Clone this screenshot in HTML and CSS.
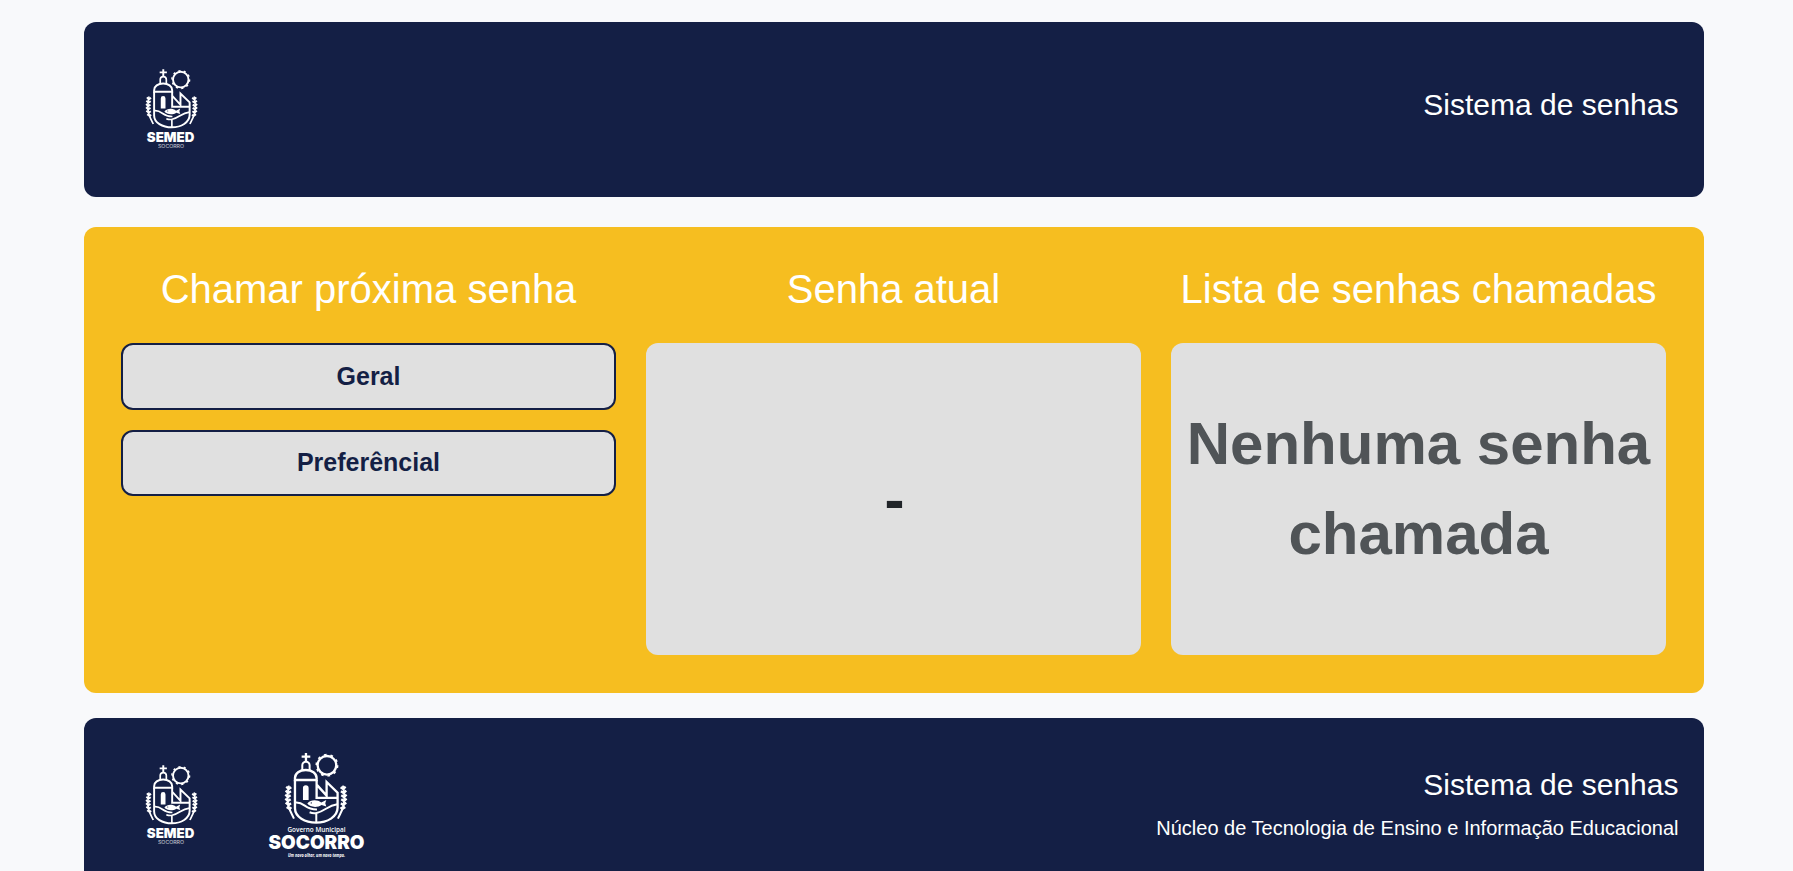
FILE: index.html
```html
<!DOCTYPE html>
<html lang="pt-BR">
<head>
<meta charset="utf-8">
<title>Sistema de senhas</title>
<link rel="stylesheet" href="styles.css">
</head>
<body>
<svg class="defs" width="0" height="0" aria-hidden="true">
  <symbol id="emblem" viewBox="100 36 196 218">
    <g fill="none" stroke="#fff" stroke-width="7">
      <path d="M168 39v26M155 50h26"/>
      <path d="M157 90V76a11 11 0 0 1 22 0v14" stroke-width="6"/>
      <path d="M135 120v-6c0-14 14-24 32.500-24s32.500 10 32.500 24v6z"/>
      <path d="M135 120v85c0 26 30 43 63.500 43s64.500-17 64.500-45v-45l-33-32v41l-30-33v40h63M200 120v20"/>
      <circle cx="231" cy="76" r="28"/>
      <circle cx="231" cy="76" r="32" stroke-width="5" stroke-dasharray="8 12.100"/>
      <path d="M137 188c28-2 27 22 64 21M262 193c-30 4-35 20-62 26-9 2-16 0-21-2M199 221v26" stroke-width="6"/>
      <path d="M117 137c-5 22-8 50 3 74 4 9 8 16 12 25M279 137c5 22 8 50-3 74-4 9-8 16-12 25" stroke-width="6"/>
      <path d="M109 140l7 7 8-5M107 152l8 7 8-5M106 164l8 7 8-5M106 176l8 7 8-5M107 188l9 7 7-5M110 201l9 6 5-5M287 140l-7 7-8-5M289 152l-8 7-8-5M290 164l-8 7-8-5M290 176l-8 7-8-5M289 188l-9 7-7-5M286 201l-9 6-5-5" stroke-width="7"/>
    </g>
    <path d="M159 180v-36a8.500 8.500 0 0 1 17 0v36zM172 191c10-12 29-13 42-3l15-8-3 10 3 10-14-5c-12 9-34 8-43-4z" fill="#fff"/>
    <circle cx="184" cy="189" r="2" fill="#141f45"/>
  </symbol>
</svg>

<header class="bar">
  <div class="logos">
    <svg class="logo-semed" viewBox="0 0 80 100" role="img" aria-label="SEMED Socorro">
      <use href="#emblem" x="14.400" y="13.500" width="54.400" height="60.500"/>
      <text x="40.600" y="86.600" class="semed-name" textLength="47.500" lengthAdjust="spacingAndGlyphs">SEMED</text>
      <text x="41" y="93.200" class="semed-city" textLength="26" lengthAdjust="spacingAndGlyphs">SOCORRO</text>
    </svg>
  </div>
  <div class="bar-text"><h3>Sistema de senhas</h3></div>
</header>

<main class="panel">
  <section class="column">
    <h2>Chamar próxima senha</h2>
    <button class="call">Geral</button>
    <button class="call">Preferêncial</button>
  </section>
  <section class="column">
    <h2>Senha atual</h2>
    <div class="card card-current">-</div>
  </section>
  <section class="column">
    <h2>Lista de senhas chamadas</h2>
    <div class="card card-muted">Nenhuma senha chamada</div>
  </section>
</main>

<footer class="bar bar-footer">
  <div class="logos">
    <svg class="logo-semed" viewBox="0 0 80 100" role="img" aria-label="SEMED Socorro">
      <use href="#emblem" x="14.400" y="13.500" width="54.400" height="60.500"/>
      <text x="40.600" y="86.600" class="semed-name" textLength="47.500" lengthAdjust="spacingAndGlyphs">SEMED</text>
      <text x="41" y="93.200" class="semed-city" textLength="26" lengthAdjust="spacingAndGlyphs">SOCORRO</text>
    </svg>
    <svg class="logo-city" viewBox="0 0 130 131" role="img" aria-label="Governo Municipal Socorro">
      <use href="#emblem" x="33.300" y="12" width="65.300" height="72.600"/>
      <text x="66.500" y="92" class="city-top" textLength="58" lengthAdjust="spacingAndGlyphs">Governo Municipal</text>
      <text x="66.500" y="109" class="city-name" textLength="96" lengthAdjust="spacingAndGlyphs">SOCORRO</text>
      <text x="66.500" y="117.300" class="city-motto" textLength="57" lengthAdjust="spacingAndGlyphs">Um novo olhar, um novo tempo.</text>
    </svg>
  </div>
  <div class="bar-text"><h3>Sistema de senhas</h3><p>Núcleo de Tecnologia de Ensino e Informação Educacional</p></div>
</footer>
</body>
</html>
```
FILE: styles.css
```css
* { box-sizing: border-box; }
body {
  margin: 0;
  padding: 22px 89px 0 84px;
  height: 100vh;
  overflow: hidden;
  background: #f8f9fb;
  color: #212529;
  font-family: "Liberation Sans", Arial, sans-serif;
  line-height: 1.5;
}
.defs { position: absolute; }
h2, h3, p { margin: 0; font-weight: 400; }
.bar {
  display: flex;
  justify-content: space-between;
  align-items: flex-start;
  height: 175px;
  padding: 0 25.5px 0 25px;
  border-radius: 12px;
  background: #141f45;
  color: #fff;
}
.logos { display: flex; align-items: flex-start; }
.logo-semed { display: block; width: 80px; height: 100px; margin: 33px 0 0 21px; }
.logo-city { display: block; width: 130px; height: 131px; margin: 22px 0 0 40px; }
.bar-text { padding-top: 65px; text-align: right; }
.bar h3 { margin-bottom: 10px; font-size: 30px; line-height: 36px; }
.bar p { font-size: 20px; line-height: 30px; }
.bar-footer .bar-text { padding-top: 49px; }
.panel {
  display: grid;
  grid-template-columns: repeat(3, 495px);
  gap: 30px;
  height: 466px;
  margin: 30px 0 25px;
  padding: 38px 38px 38px 37px;
  border-radius: 12px;
  background: #f6be20;
}
.column { display: flex; flex-direction: column; }
h2 {
  margin-bottom: 30px;
  color: #fff;
  font-size: 40px;
  line-height: 48px;
  text-align: center;
  white-space: nowrap;
}
.call {
  height: 66.5px;
  margin: 0 0 20px;
  border: 2px solid #141f45;
  border-radius: 12px;
  background: #e0e0e0;
  color: #141f45;
  font: bold 25px/37.5px "Liberation Sans", Arial, sans-serif;
}
.card {
  display: flex;
  align-items: center;
  justify-content: center;
  height: 312px;
  border-radius: 12px;
  background: #e0e0e0;
  font-size: 60px;
  font-weight: 700;
  text-align: center;
}
.card-current { padding: 2px 0 0 2px; }
.card-muted { padding-bottom: 20px; color: #505457; }
svg text { fill: #fff; text-anchor: middle; }
.semed-name { font: 900 13.6px Inter, sans-serif; }
.semed-city { font: 400 4.6px Inter, sans-serif; opacity: .75; }
.city-top { font: 600 6.8px "Open Sans", sans-serif; }
.city-name { font: 900 19px Inter, sans-serif; }
.city-motto { font: italic 700 5.6px "Open Sans", sans-serif; }
```
